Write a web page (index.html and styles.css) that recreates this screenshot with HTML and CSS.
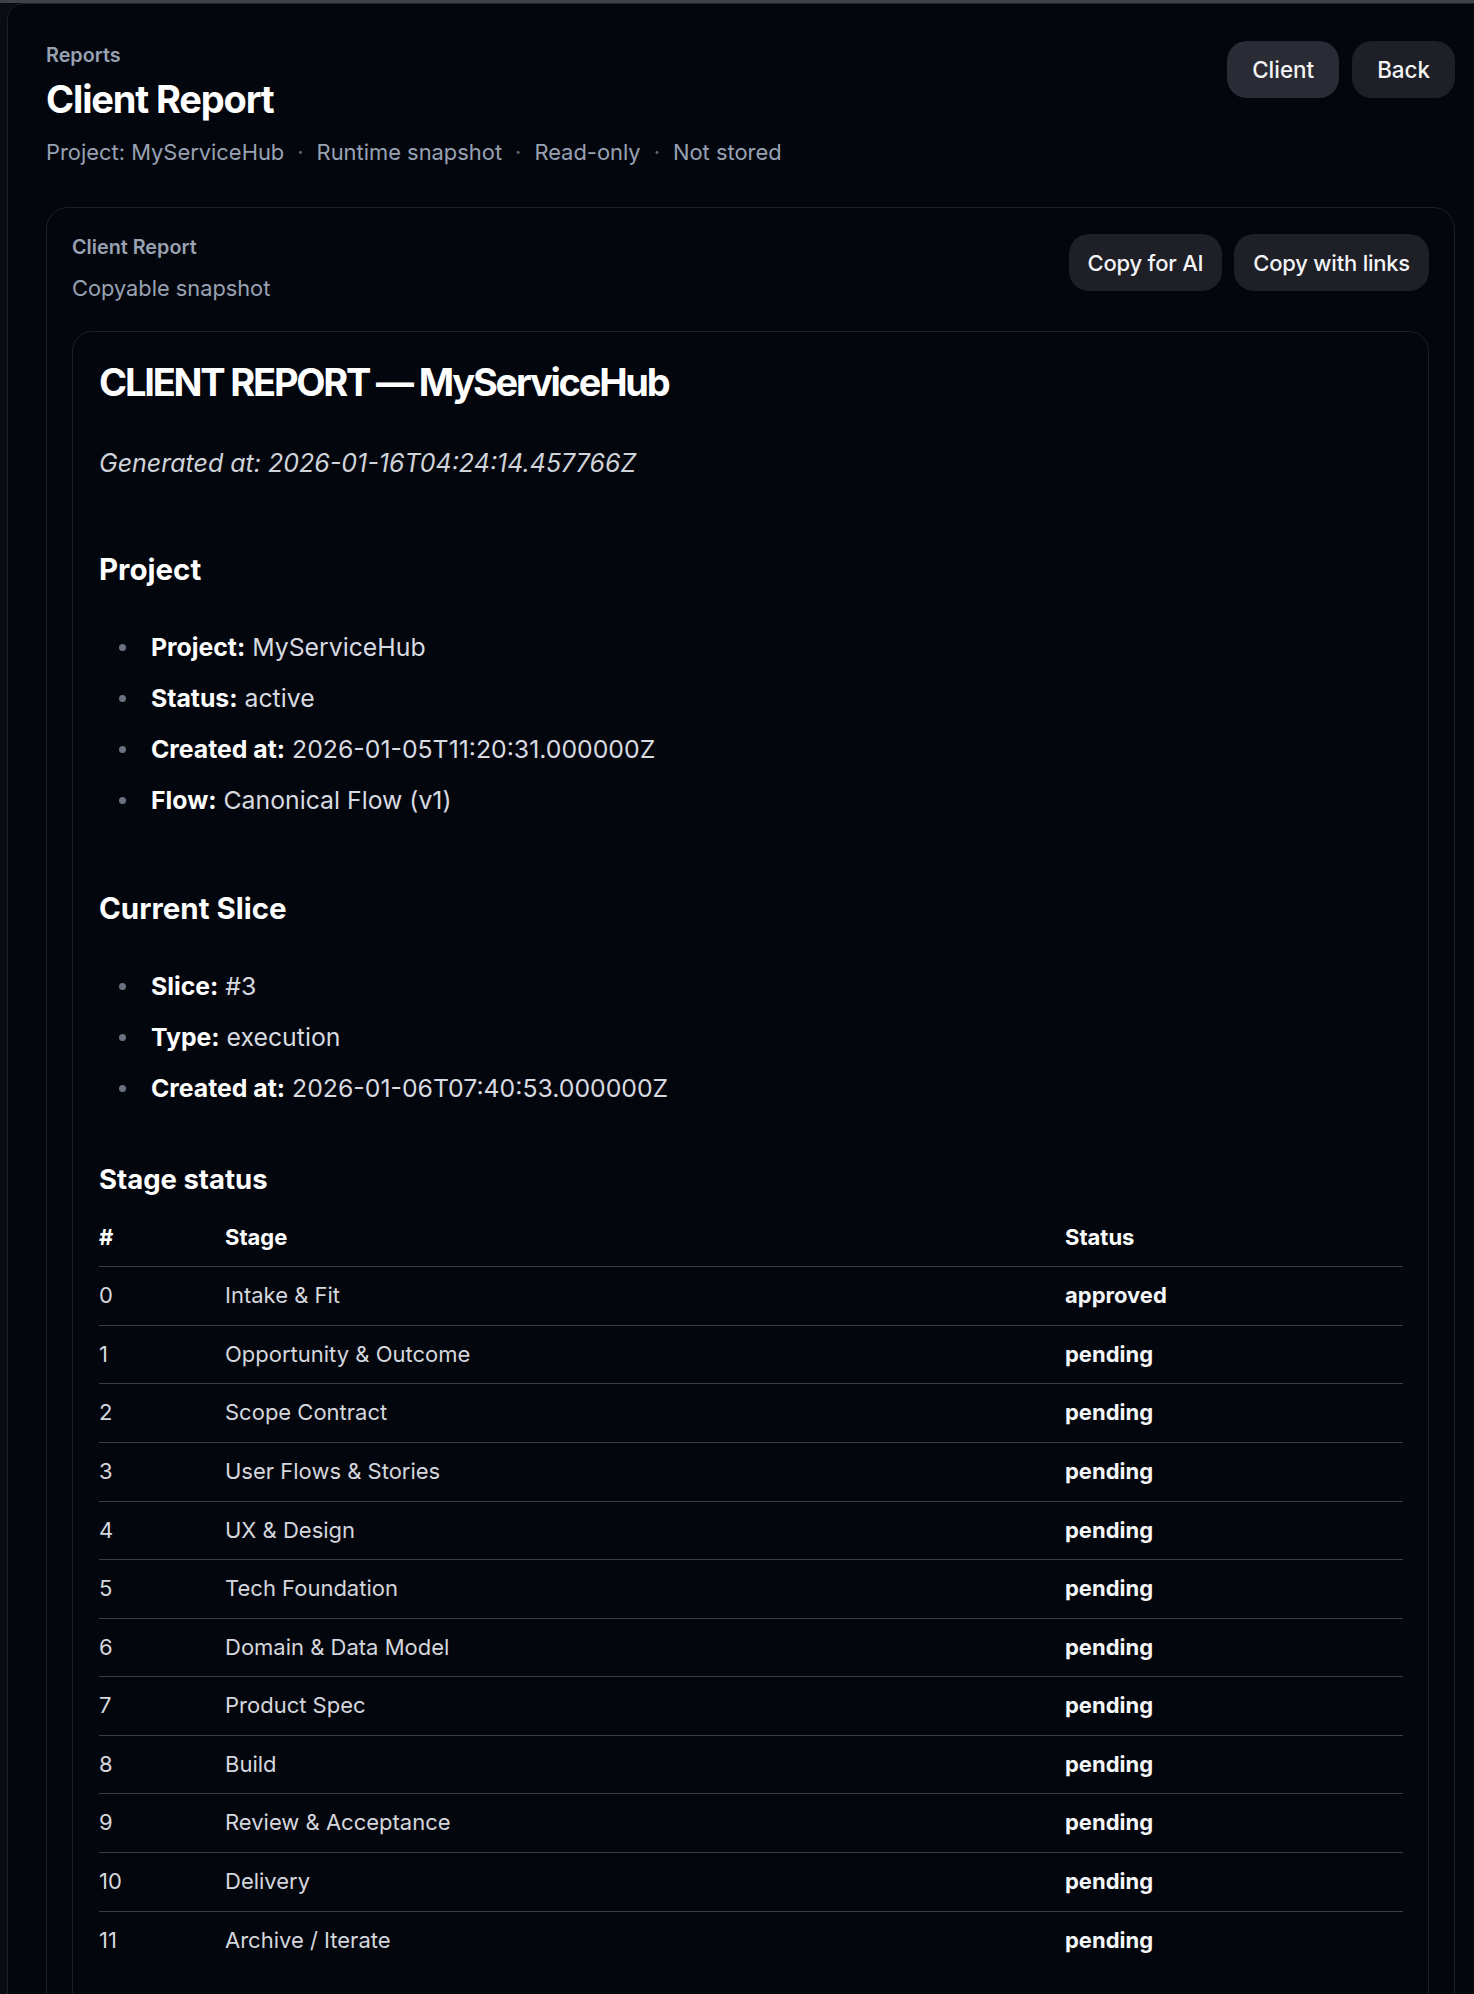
FILE: index.html
```html
<!DOCTYPE html>
<html lang="en">
<head>
<meta charset="utf-8">
<title>Client Report</title>
<link rel="stylesheet" href="styles.css">
</head>
<body>
<div class="topbar"></div>
<div class="shell">
  <header class="page-head">
    <div class="page-title">
      <div class="eyebrow">Reports</div>
      <h1 class="title">Client Report</h1>
      <div class="meta">
        <span>Project: MyServiceHub</span><span class="sep">·</span><span>Runtime snapshot</span><span class="sep">·</span><span>Read-only</span><span class="sep">·</span><span>Not stored</span>
      </div>
    </div>
    <div class="actions">
      <button class="btn btn-active">Client</button>
      <button class="btn">Back</button>
    </div>
  </header>

  <section class="card">
    <div class="card-head">
      <div>
        <div class="card-label">Client Report</div>
        <div class="card-sub">Copyable snapshot</div>
      </div>
      <div class="actions small-gap">
        <button class="btn btn-copy">Copy for AI</button>
        <button class="btn btn-copy">Copy with links</button>
      </div>
    </div>

    <article class="report">
      <h1 class="r-h1">CLIENT REPORT — MyServiceHub</h1>
      <p class="r-gen">Generated at: 2026-01-16T04:24:14.457766Z</p>

      <h2 class="r-h2 first">Project</h2>
      <ul class="r-list">
        <li><strong>Project:</strong> MyServiceHub</li>
        <li><strong>Status:</strong> active</li>
        <li><strong>Created at:</strong> 2026-01-05T11:20:31.000000Z</li>
        <li><strong>Flow:</strong> Canonical Flow (v1)</li>
      </ul>

      <h2 class="r-h2">Current Slice</h2>
      <ul class="r-list">
        <li><strong>Slice:</strong> #3</li>
        <li><strong>Type:</strong> execution</li>
        <li><strong>Created at:</strong> 2026-01-06T07:40:53.000000Z</li>
      </ul>

      <h3 class="r-h3">Stage status</h3>
      <table class="r-table">
        <colgroup><col class="c-num"><col><col class="c-status"></colgroup>
        <thead>
          <tr><th>#</th><th>Stage</th><th>Status</th></tr>
        </thead>
        <tbody>
          <tr><td>0</td><td>Intake &amp; Fit</td><td class="st">approved</td></tr>
          <tr><td>1</td><td>Opportunity &amp; Outcome</td><td class="st">pending</td></tr>
          <tr><td>2</td><td>Scope Contract</td><td class="st">pending</td></tr>
          <tr><td>3</td><td>User Flows &amp; Stories</td><td class="st">pending</td></tr>
          <tr><td>4</td><td>UX &amp; Design</td><td class="st">pending</td></tr>
          <tr><td>5</td><td>Tech Foundation</td><td class="st">pending</td></tr>
          <tr><td>6</td><td>Domain &amp; Data Model</td><td class="st">pending</td></tr>
          <tr><td>7</td><td>Product Spec</td><td class="st">pending</td></tr>
          <tr><td>8</td><td>Build</td><td class="st">pending</td></tr>
          <tr><td>9</td><td>Review &amp; Acceptance</td><td class="st">pending</td></tr>
          <tr><td>10</td><td>Delivery</td><td class="st">pending</td></tr>
          <tr><td>11</td><td>Archive / Iterate</td><td class="st">pending</td></tr>
        </tbody>
      </table>
    </article>
  </section>
</div>
</body>
</html>
```

FILE: styles.css
```css
* { box-sizing: border-box; }
html, body { margin: 0; padding: 0; }
body {
  background: #0a0c14;
  font-family: Inter, "Noto Sans", sans-serif;
  color: #f5f6f8;
  overflow: hidden;
}
.topbar { height: 3px; background: #404247; }

.shell {
  margin-left: 7px;
  width: 1487px;
  background: #04060d;
  border: 1px solid #1c202a;
  border-radius: 16px;
  padding: 37px 38px 40px 38px;
}

.page-head {
  display: flex;
  justify-content: space-between;
  align-items: flex-start;
}
.eyebrow {
  font-size: 19.8px;
  line-height: 28px;
  font-weight: 600;
  color: #98a2b3;
}
.title {
  margin: 7px 0 0;
  font-size: 38px;
  line-height: 46px;
  font-weight: 700;
  letter-spacing: -0.03em;
  color: #ffffff;
}
.meta {
  margin-top: 14px;
  font-size: 21.9px;
  line-height: 32px;
  color: #98a2b3;
}
.meta .sep { margin: 0 13px; color: #5d6575; }

.actions { display: flex; gap: 13px; }
.actions.small-gap { gap: 12px; }
.btn {
  height: 57px;
  padding: 0 25px;
  border: 0;
  border-radius: 20px;
  background: #1e1f27;
  color: #f3f4f6;
  font-family: inherit;
  font-size: 22.4px;
  font-weight: 500;
}
.btn-active { background: #2a2b34; }
.btn-copy { padding: 0 19px; font-size: 22px; letter-spacing: -0.01em; }

.card {
  margin-top: 39px;
  border: 1px solid #1c202a;
  border-radius: 22px;
  padding: 26px 25px 25px 25px;
}
.card-head {
  display: flex;
  justify-content: space-between;
  align-items: flex-start;
}
.card-label {
  font-size: 19.8px;
  line-height: 26px;
  font-weight: 600;
  color: #98a2b3;
}
.card-sub {
  margin-top: 12px;
  font-size: 21.8px;
  line-height: 32px;
  color: #98a2b3;
}

.report {
  margin-top: 27px;
  border: 1px solid #1b1f28;
  border-radius: 20px;
  padding: 27px 25px 40px 26px;
}
.r-h1 {
  margin: 0;
  font-size: 38px;
  line-height: 46px;
  font-weight: 700;
  letter-spacing: -0.058em;
  color: #ffffff;
}
.r-gen {
  margin: 41px 0 0;
  font-size: 25px;
  line-height: 34px;
  font-style: italic;
  color: #cfd3da;
}
.r-h2 {
  margin: 69.7px 0 0;
  font-size: 29.5px;
  line-height: 38px;
  font-weight: 700;
  letter-spacing: 0;
  color: #ffffff;
}
.r-h2.first { margin-top: 69.5px; }
.r-list {
  list-style: none;
  margin: 40.5px 0 0;
  padding: 0 0 0 52px;
}
.r-list li {
  position: relative;
  font-size: 24.8px;
  line-height: 38.4px;
  color: #d7dae0;
}
.r-list li + li { margin-top: 12.5px; }
.r-list li::before {
  content: "";
  position: absolute;
  left: -32px;
  top: 16px;
  width: 7px;
  height: 7px;
  border-radius: 50%;
  background: #6b7280;
}
.r-list strong { color: #ffffff; font-weight: 700; }

.r-h3 {
  margin: 53px 0 0;
  font-size: 27.5px;
  line-height: 36px;
  font-weight: 700;
  letter-spacing: 0;
  color: #ffffff;
}
.r-table {
  margin-top: 12px;
  width: 100%;
  border-collapse: collapse;
  table-layout: fixed;
}
.c-num { width: 126px; }
.c-status { width: 338px; }
.r-table th, .r-table td {
  text-align: left;
  padding: 14px 0;
  font-size: 22px;
  line-height: 29.6px;
}
.r-table th { font-weight: 700; color: #ffffff; }
.r-table td { color: #d4d7dd; }
.r-table td.st { font-weight: 700; color: #f5f6f8; }
.r-table thead tr, .r-table tbody tr { border-bottom: 1px solid #3a3d48; }
.r-table tbody tr:last-child { border-bottom: 0; }
```
